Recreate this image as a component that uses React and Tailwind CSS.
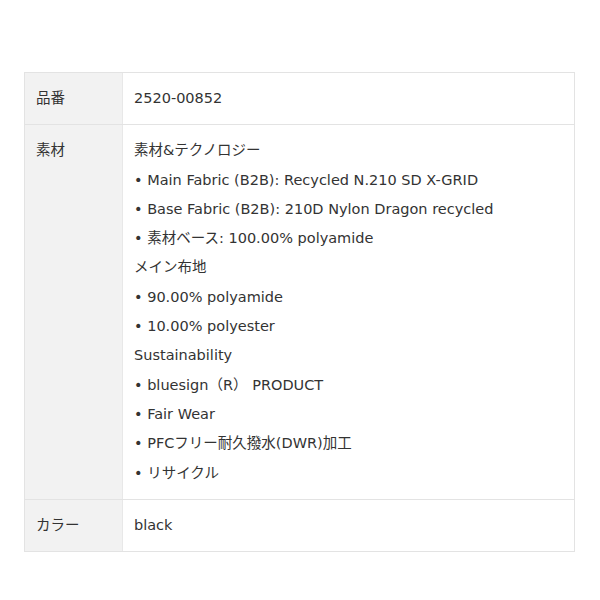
const ROWS = [
  { label: '品番', lines: ['2520-00852'] },
  {
    label: '素材',
    lines: [
      '素材&テクノロジー',
      '• Main Fabric (B2B): Recycled N.210 SD X-GRID',
      '• Base Fabric (B2B): 210D Nylon Dragon recycled',
      '• 素材ベース: 100.00% polyamide',
      'メイン布地',
      '• 90.00% polyamide',
      '• 10.00% polyester',
      'Sustainability',
      '• bluesign（R） PRODUCT',
      '• Fair Wear',
      '• PFCフリー耐久撥水(DWR)加工',
      '• リサイクル',
    ],
  },
  { label: 'カラー', lines: ['black'] },
];

export default function App() {
  return (
    <div className="w-[600px] h-[600px] bg-white pt-[72px] px-[24px] text-[#333] text-[14.5px] leading-[29.3px]"
      style={{ fontFamily: '"DejaVu Sans", "Noto Sans CJK JP", sans-serif' }}>
      <div className="w-[551px] border border-[#e3e3e3]">
        {ROWS.map((row, i) => (
          <div key={row.label} className={`flex ${i > 0 ? 'border-t border-[#e3e3e3]' : ''}`}>
            <div className="w-[98px] shrink-0 bg-[#f2f2f2] px-[11px] py-[11px] border-r border-[#e8e8e8]">
              {row.label}
            </div>
            <div className="flex-1 px-[11px] py-[11px]">
              {row.lines.map((l) => (
                <div key={l}>{l}</div>
              ))}
            </div>
          </div>
        ))}
      </div>
    </div>
  );
}
